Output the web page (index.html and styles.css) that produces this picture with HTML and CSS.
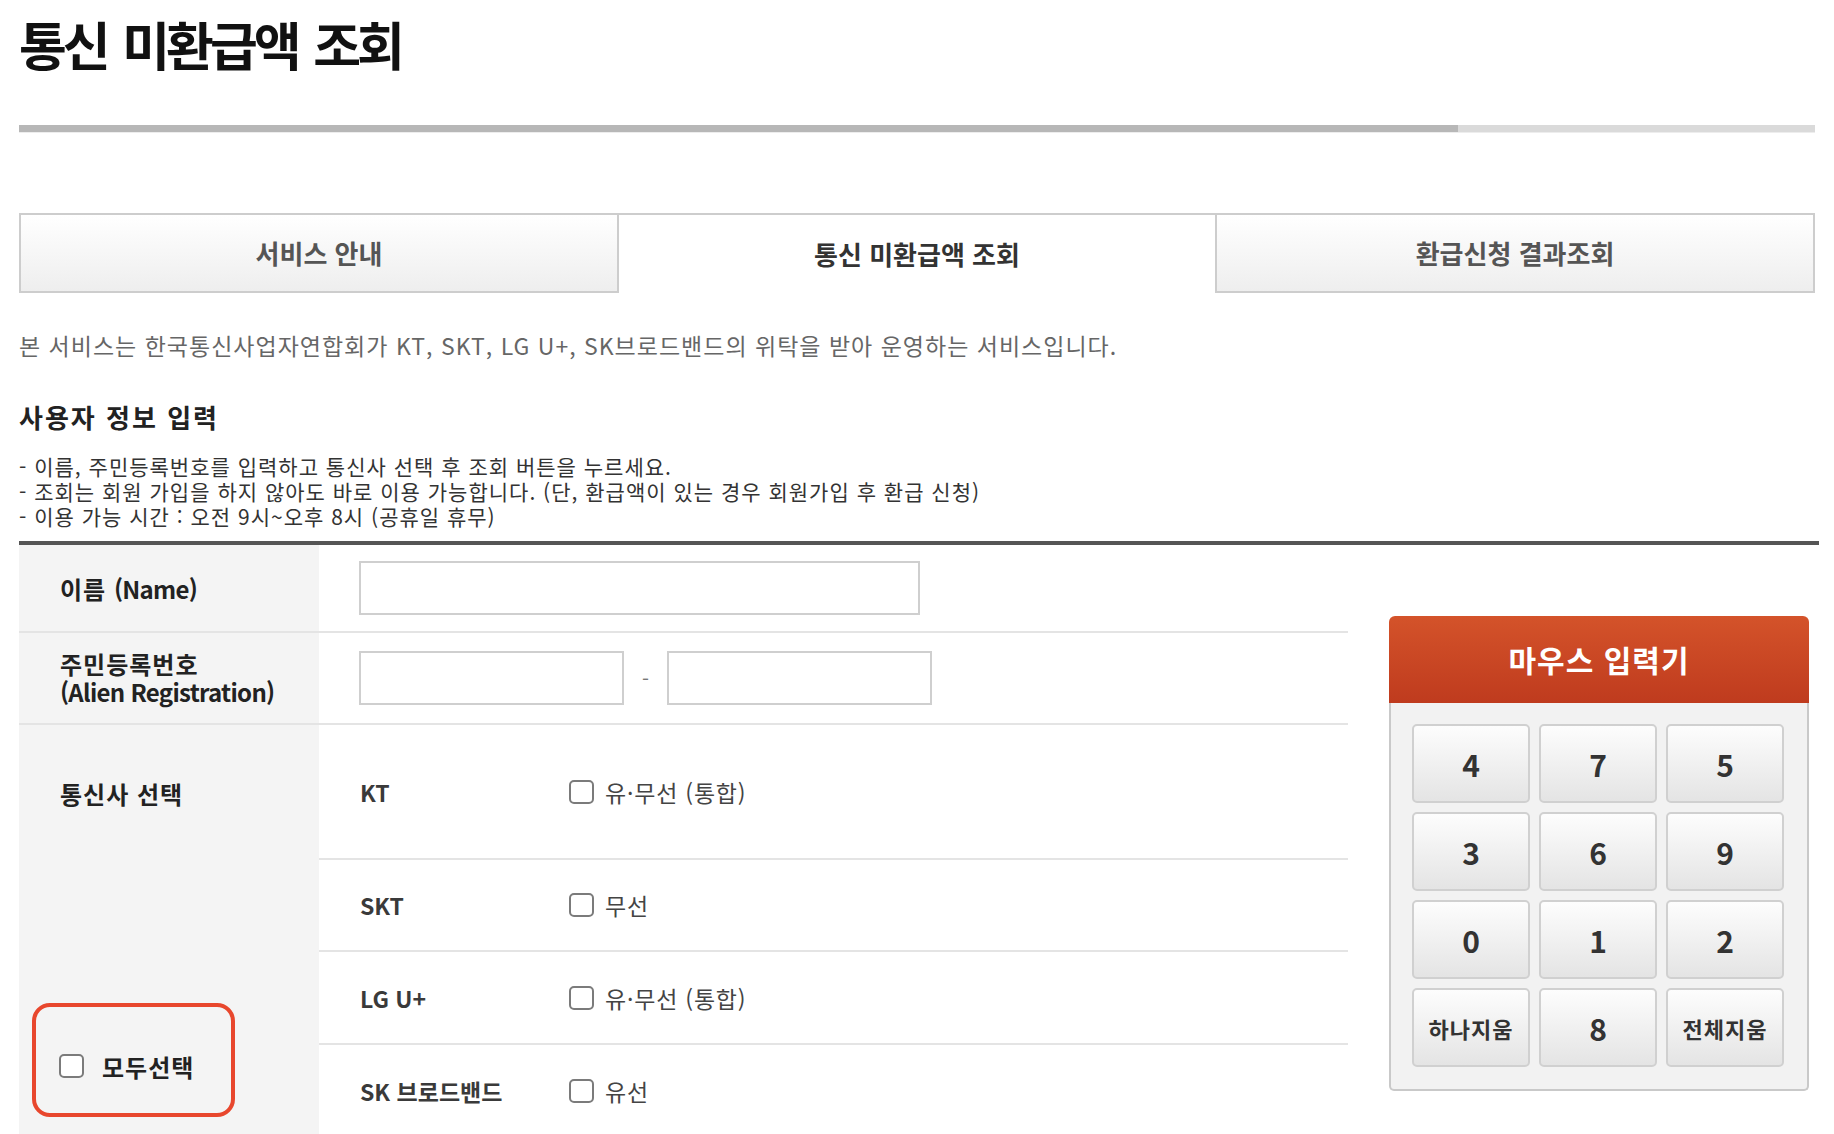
FILE: index.html
```html
<!DOCTYPE html>
<html lang="ko">
<head>
    <meta charset="UTF-8">
    <meta name="viewport" content="width=device-width, initial-scale=1.0">
    <title>통신 미환급액 조회</title>
    <link rel="stylesheet" href="styles.css">
</head>
<body>
    <div class="container">
        <h1 class="title">통신 미환급액 조회</h1>
        <div class="progress">
            <div class="progress-fill" style="width: 80.1%"></div>
        </div>

        <div class="tabs">
            <div class="tab">서비스 안내</div>
            <div class="tab active">통신 미환급액 조회</div>
            <div class="tab">환급신청 결과조회</div>
        </div>

        <p class="intro">본 서비스는 한국통신사업자연합회가 KT, SKT, LG U+, SK브로드밴드의 위탁을 받아 운영하는 서비스입니다.</p>

        <h2 class="section-title">사용자 정보 입력</h2>
        <ul class="notes">
            <li>- 이름, 주민등록번호를 입력하고 통신사 선택 후 조회 버튼을 누르세요.</li>
            <li>- 조회는 회원 가입을 하지 않아도 바로 이용 가능합니다. (단, 환급액이 있는 경우 회원가입 후 환급 신청)</li>
            <li>- 이용 가능 시간 : 오전 9시~오후 8시 (공휴일 휴무)</li>
        </ul>

        <div class="form-area">
            <div class="form-table">
                <div class="row row-name">
                    <div class="th"><span>이름 <span class="en">(Name)</span></span></div>
                    <div class="td">
                        <input type="text" class="field">
                    </div>
                </div>
                <div class="row row-id">
                    <div class="th">
                        <div class="th-multi">주민등록번호<br><span class="en">(Alien Registration)</span></div>
                    </div>
                    <div class="td">
                        <input type="text" class="field field-half">
                        <span class="dash">-</span>
                        <input type="password" class="field field-half">
                    </div>
                </div>
                <div class="row row-carrier">
                    <div class="th th-carrier">
                        <span class="carrier-label">통신사 선택</span>
                        <label class="select-all">
                            <input type="checkbox" class="check">
                            <span>모두선택</span>
                        </label>
                    </div>
                    <div class="carriers">
                        <div class="carrier carrier-kt">
                            <span class="carrier-name">KT</span>
                            <label class="opt"><input type="checkbox" class="check"><span>유·무선 (통합)</span></label>
                        </div>
                        <div class="carrier carrier-skt">
                            <span class="carrier-name">SKT</span>
                            <label class="opt"><input type="checkbox" class="check"><span>무선</span></label>
                        </div>
                        <div class="carrier carrier-lg">
                            <span class="carrier-name">LG U+</span>
                            <label class="opt"><input type="checkbox" class="check"><span>유·무선 (통합)</span></label>
                        </div>
                        <div class="carrier carrier-sk">
                            <span class="carrier-name">SK 브로드밴드</span>
                            <label class="opt"><input type="checkbox" class="check"><span>유선</span></label>
                        </div>
                    </div>
                </div>
            </div>

            <div class="keypad">
                <div class="keypad-head">마우스 입력기</div>
                <div class="keypad-body">
                    <button class="key">4</button>
                    <button class="key">7</button>
                    <button class="key">5</button>
                    <button class="key">3</button>
                    <button class="key">6</button>
                    <button class="key">9</button>
                    <button class="key">0</button>
                    <button class="key">1</button>
                    <button class="key">2</button>
                    <button class="key key-text">하나지움</button>
                    <button class="key">8</button>
                    <button class="key key-text">전체지움</button>
                </div>
            </div>
        </div>
    </div>
</body>
</html>
```

FILE: styles.css
```css
body {
    margin: 0;
    font-family: "Noto Sans CJK KR", "Noto Sans", sans-serif;
    color: #333;
    background-color: #fff;
}

.container {
    width: 1796px;
    margin: 0 19px;
}

h1.title {
    margin: 0;
    padding-top: 14px;
    font-size: 52px;
    line-height: 60px;
    letter-spacing: -4px;
    word-spacing: 5px;
    font-weight: 700;
    color: #111;
}

.progress {
    margin-top: 51px;
    height: 7px;
    background-color: #dadada;
    border-bottom: 1px solid #ededed;
}

.progress-fill {
    height: 100%;
    background-color: #b7b7b7;
}

.tabs {
    display: flex;
    margin-top: 80px;
    height: 80px;
}

.tab {
    flex: 1;
    box-sizing: border-box;
    border: 2px solid #cdcdcd;
    background: linear-gradient(#ffffff, #eeeeee);
    text-align: center;
    font-size: 26px;
    line-height: 76px;
    font-weight: 700;
    color: #555;
}

.tab.active {
    border-width: 2px 0 0;
    background: #fff;
    line-height: 78px;
    color: #333;
}

.intro {
    margin: 37px 0 0;
    font-size: 23px;
    line-height: 31px;
    letter-spacing: 1px;
    color: #666;
}

.section-title {
    margin: 38px 0 0;
    font-size: 26px;
    line-height: 36px;
    letter-spacing: 2px;
    font-weight: 700;
    color: #222;
}

.notes {
    margin: 19px 0 0;
    padding: 0;
    list-style: none;
    font-size: 21px;
    line-height: 25px;
    letter-spacing: 1px;
    color: #333;
}

/* form + keypad */
.form-area {
    display: flex;
    gap: 41px;
    width: 1800px;
    margin-top: 12px;
    border-top: 4px solid #555;
}

.form-table {
    width: 1329px;
    flex: none;
}

.row {
    display: flex;
    border-bottom: 2px solid #e4e4e4;
}

.row-name {
    height: 86px;
}

.row-id {
    height: 90px;
}

.row-carrier {
    border-bottom: none;
}

.th {
    width: 300px;
    flex: none;
    box-sizing: border-box;
    padding-left: 41px;
    background-color: #f4f4f4;
    display: flex;
    align-items: center;
    font-size: 24px;
    font-weight: 700;
    letter-spacing: 1px;
    color: #222;
}

.th .en {
    letter-spacing: -0.7px;
}

.th-multi {
    line-height: 28px;
}

.td {
    flex: 1;
    display: flex;
    align-items: center;
    padding-left: 40px;
}

.field {
    width: 561px;
    height: 54px;
    box-sizing: border-box;
    border: 2px solid #cfcfcf;
    padding: 0 12px;
    font-family: inherit;
    font-size: 20px;
    outline: none;
}

.field-half {
    width: 265px;
}

.dash {
    margin: 0 18px;
    font-size: 20px;
    color: #777;
}

.th-carrier {
    flex-direction: column;
    align-items: flex-start;
    justify-content: space-between;
    padding: 44px 0 21px 13px;
}

.carrier-label {
    margin-left: 28px;
    line-height: 50px;
}

.select-all {
    width: 203px;
    height: 114px;
    box-sizing: border-box;
    border: 4px solid #e8472d;
    border-radius: 18px;
    display: flex;
    align-items: center;
    gap: 18px;
    padding: 12px 0 0 23px;
    font-size: 24px;
    font-weight: 700;
    color: #222;
}

.check {
    -webkit-appearance: none;
    appearance: none;
    flex: none;
    width: 25px;
    height: 24px;
    margin: 0;
    box-sizing: border-box;
    border: 2px solid #7b7b7b;
    border-radius: 5px;
    background-color: #fff;
}

.carriers {
    flex: 1;
}

.carrier {
    display: flex;
    align-items: center;
    padding-left: 41px;
    border-bottom: 2px solid #e4e4e4;
}

.carrier-kt {
    height: 133px;
}

.carrier-skt {
    height: 90px;
}

.carrier-lg,
.carrier-sk {
    height: 91px;
}

.carrier-name {
    width: 209px;
    font-size: 23px;
    font-weight: 700;
    color: #3a3a3a;
}

.opt {
    display: flex;
    align-items: center;
    gap: 11px;
    font-size: 23px;
    letter-spacing: 0.8px;
    color: #444;
}

.keypad {
    width: 420px;
    flex: none;
    align-self: flex-start;
    margin-top: 71px;
}

.keypad-head {
    height: 87px;
    border-radius: 6px 6px 0 0;
    background: linear-gradient(#d4532a, #bf3b1e);
    text-align: center;
    font-size: 30px;
    line-height: 87px;
    letter-spacing: 1px;
    font-weight: 700;
    color: #fff;
}

.keypad-body {
    display: grid;
    grid-template-columns: repeat(3, 118px);
    grid-auto-rows: 79px;
    gap: 9px;
    padding: 21px 23px 22px 21px;
    border: 2px solid #c9c9c9;
    border-top: none;
    border-radius: 0 0 5px 5px;
    background-color: #f2f2f2;
}

.key {
    padding: 0;
    border: 2px solid #d0d0d0;
    border-radius: 5px;
    background: linear-gradient(#fdfdfd, #e4e4e4);
    font-family: inherit;
    font-size: 30px;
    font-weight: 700;
    color: #333;
    cursor: pointer;
}

.key-text {
    font-size: 22px;
    letter-spacing: 1px;
}
```
